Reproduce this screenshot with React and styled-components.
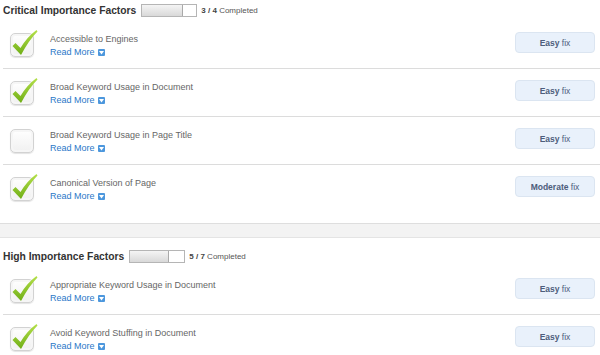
import React from 'react';
import styled, { createGlobalStyle } from 'styled-components';

const Global = createGlobalStyle`
  body {
    margin: 0;
    background: #fff;
    font-family: "Liberation Sans", Arial, sans-serif;
  }
`;

const Page = styled.div`
  width: 600px;
  height: 355px;
  overflow: hidden;
  background: #fff;
`;

const Header = styled.div`
  display: flex;
  align-items: center;
  height: ${p => p.$height}px;
  padding-left: 3px;
  padding-top: ${p => p.$top || 0}px;
  box-sizing: border-box;
`;

const HeaderTitle = styled.h2`
  margin: 0 5px 0 0;
  font-size: 10.3px;
  font-weight: bold;
  color: #333;
`;

const Progress = styled.div`
  width: 54px;
  height: 11px;
  border: 1px solid #b5b5b5;
  background: #fff;
  margin-right: 4px;
`;

const ProgressFill = styled.div`
  height: 100%;
  background: linear-gradient(#f4f4f4, #d9d9d9);
  border-right: 1px solid #a9a9a9;
  box-sizing: border-box;
`;

const Count = styled.span`
  font-size: 8px;
  color: #555;
  b {
    font-weight: bold;
    color: #444;
  }
`;

const Row = styled.div`
  display: flex;
  height: 48px;
  margin-left: 3px;
  border-bottom: ${p => (p.$last ? 'none' : '1px solid #dcdcdc')};
  box-sizing: border-box;
`;

const CheckWrap = styled.div`
  position: relative;
  width: 24px;
  height: 24px;
  margin: 12px 16px 0 7px;
  flex: none;
`;

const Box = styled.div`
  width: 24px;
  height: 24px;
  box-sizing: border-box;
  border: 1px solid #d2d2d2;
  border-radius: 5px;
  background: linear-gradient(#ffffff, #f0f0f0);
  box-shadow: inset 0 0 0 2px #f6f6f6, 0 1px 1px #e4e4e4;
`;

const Tick = styled.svg`
  position: absolute;
  left: 0;
  top: -5px;
`;

const Texts = styled.div`
  flex: 1;
  padding-top: 12px;
  font-size: 9px;
`;

const Title = styled.div`
  color: #666;
  line-height: 12px;
`;

const ReadMore = styled.a`
  display: flex;
  width: fit-content;
  align-items: center;
  gap: 3px;
  margin-top: 2px;
  line-height: 11px;
  color: #2a78c8;
  text-decoration: none;
`;

const MoreIcon = styled.span`
  display: inline-flex;
  align-items: center;
  justify-content: center;
  width: 7px;
  height: 7px;
  background: #4c97dd;
  border-radius: 1px;
`;

const FixButton = styled.button`
  width: 80px;
  height: 21px;
  margin: 11px 5px 0 0;
  padding: 0;
  border: 1px solid #dbe5f1;
  border-radius: 4px;
  background: #e9f1fb;
  font-family: inherit;
  font-size: 8.5px;
  color: #4d5d7c;
  b {
    font-weight: bold;
  }
`;

const Band = styled.div`
  height: 15px;
  margin-top: 10px;
  background: #f3f3f3;
  border-top: 1px solid #dedede;
  border-bottom: 1px solid #e4e4e4;
  box-sizing: border-box;
`;

function Check({ done }) {
  return (
    <CheckWrap>
      <Box />
      {done && (
        <Tick width="30" height="30" viewBox="0 0 30 30">
          <defs>
            <linearGradient id="tg" x1="0" y1="0" x2="0" y2="1">
              <stop offset="0" stopColor="#b4e04a" />
              <stop offset="1" stopColor="#6fae16" />
            </linearGradient>
          </defs>
          <path
            d="M2.5 18 L5.5 15 L10.5 20 Q17 9 26.5 2 L27.5 3.5 Q19 12 11 27 Z"
            fill="url(#tg)"
          />
        </Tick>
      )}
    </CheckWrap>
  );
}

function Factor({ item, last }) {
  return (
    <Row $last={last}>
      <Check done={item.done} />
      <Texts>
        <Title>{item.title}</Title>
        <ReadMore href="#">
          Read More
          <MoreIcon>
            <svg width="5" height="4" viewBox="0 0 5 4">
              <path d="M0 0 H5 L2.5 3.5 Z" fill="#fff" />
            </svg>
          </MoreIcon>
        </ReadMore>
      </Texts>
      <FixButton>
        <b>{item.level}</b> fix
      </FixButton>
    </Row>
  );
}

const sections = [
  {
    name: 'Critical Importance Factors',
    done: 3,
    total: 4,
    items: [
      { title: 'Accessible to Engines', done: true, level: 'Easy' },
      { title: 'Broad Keyword Usage in Document', done: true, level: 'Easy' },
      { title: 'Broad Keyword Usage in Page Title', done: false, level: 'Easy' },
      { title: 'Canonical Version of Page', done: true, level: 'Moderate' },
    ],
  },
  {
    name: 'High Importance Factors',
    done: 5,
    total: 7,
    items: [
      { title: 'Appropriate Keyword Usage in Document', done: true, level: 'Easy' },
      { title: 'Avoid Keyword Stuffing in Document', done: true, level: 'Easy' },
    ],
  },
];

export default function App() {
  return (
    <Page>
      <Global />
      {sections.map((s, i) => (
        <div key={s.name}>
          <Header $height={i === 0 ? 21 : 29} $top={i === 0 ? 0 : 7}>
            <HeaderTitle>{s.name}</HeaderTitle>
            <Progress>
              <ProgressFill style={{ width: `${(s.done / s.total) * 100}%` }} />
            </Progress>
            <Count>
              <b>{s.done} / {s.total}</b> Completed
            </Count>
          </Header>
          {s.items.map((it, j) => (
            <Factor key={it.title} item={it} last={i === 0 && j === s.items.length - 1} />
          ))}
          {i === 0 && <Band />}
        </div>
      ))}
    </Page>
  );
}
